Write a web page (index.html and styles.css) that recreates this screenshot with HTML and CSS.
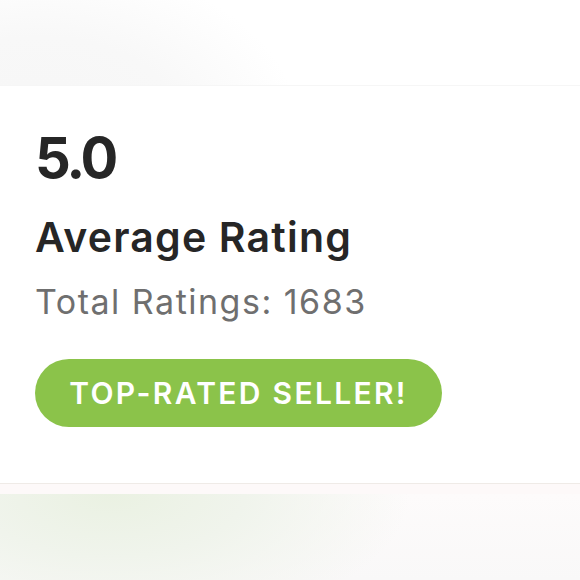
FILE: index.html
```html
<!DOCTYPE html>
<html>
<head>
<meta charset="utf-8">
<link rel="stylesheet" href="styles.css">
</head>
<body>
<div class="top"></div>
<section class="card">
  <div class="score">5.0</div>
  <div class="label">Average Rating</div>
  <div class="total">Total Ratings: 1683</div>
  <div class="badge">TOP-RATED SELLER!</div>
</section>
<div class="bottom"></div>
</body>
</html>
```
FILE: styles.css
```css
html, body {
  margin: 0;
  padding: 0;
}
body {
  width: 580px;
  height: 580px;
  overflow: hidden;
  background: #ffffff;
  font-family: Inter, "Noto Sans", sans-serif;
  display: flex;
  flex-direction: column;
}
.top {
  height: 85px;
  flex: none;
  background:
    radial-gradient(ellipse 260px 170px at 40px 130px, #f6f6f6 0%, #f8f8f8 55%, rgba(255,255,255,0) 100%),
    #ffffff;
}
.card {
  flex: none;
  height: 399px;
  box-sizing: border-box;
  padding: 44px 0 0 35px;
  background: #ffffff;
  border-top: 1px solid #f6f6f6;
  border-bottom: 1px solid #efebe7;
  display: flex;
  flex-direction: column;
  align-items: flex-start;
}
.score {
  font-size: 56px;
  line-height: 1;
  font-weight: 700;
  color: #262626;
  letter-spacing: -3px;
}
.label {
  margin-top: 31px;
  font-size: 41px;
  line-height: 1;
  font-weight: 600;
  color: #262626;
  letter-spacing: 1.2px;
}
.total {
  margin-top: 27px;
  font-size: 34px;
  line-height: 1;
  font-weight: 400;
  color: #6f6f6f;
  letter-spacing: 1.5px;
}
.badge {
  margin-top: 40px;
  height: 68px;
  width: 407px;
  box-sizing: border-box;
  border-radius: 34px;
  background: #8bc34a;
  color: #ffffff;
  font-size: 30px;
  font-weight: 600;
  letter-spacing: 2.3px;
  display: flex;
  align-items: center;
  justify-content: center;
}
.bottom {
  flex: 1;
  border-top: 10px solid #fdf9f9;
  background:
    radial-gradient(ellipse 300px 140px at 110px 0px, #eaf1e2 0%, #f0f4ec 45%, rgba(250,250,250,0) 100%),
    linear-gradient(#fdfbfb, #f9f8f8);
}
```
